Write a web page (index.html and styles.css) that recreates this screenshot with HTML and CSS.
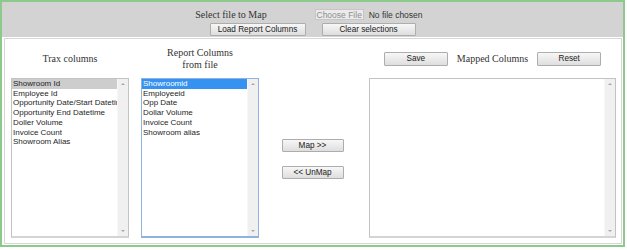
FILE: index.html
```html
<!DOCTYPE html>
<html>
<head>
    <title>Column Mapping</title>
    <link rel="stylesheet" href="styles.css">
</head>
<body>
    <div class="mapper">
        <div class="toolbar">
            <div class="file-row">
                <span class="file-label">Select file to Map</span>
                <span class="file-input">
                    <span class="file-btn">Choose File</span>
                    <span class="file-name">No file chosen</span>
                </span>
            </div>
            <div class="action-row">
                <button class="btn btn-load">Load Report Columns</button>
                <button class="btn btn-clear">Clear selections</button>
            </div>
        </div>

        <div class="panel">
            <div class="col col-trax">
                <div class="col-head">Trax columns</div>
                <div class="listbox">
                    <ul class="options">
                        <li class="selected">Showroom Id</li>
                        <li>Employee Id</li>
                        <li>Opportunity Date/Start Datetime</li>
                        <li>Opportunity End Datetime</li>
                        <li>Doller Volume</li>
                        <li>Invoice Count</li>
                        <li>Showroom Alias</li>
                    </ul>
                    <div class="scrollbar"><span class="arrow up"></span><span class="arrow down"></span></div>
                </div>
            </div>

            <div class="col col-report">
                <div class="col-head">Report Columns<br>from file</div>
                <div class="listbox focused">
                    <ul class="options">
                        <li class="selected">Showroomid</li>
                        <li>Employeeid</li>
                        <li>Opp Date</li>
                        <li>Dollar Volume</li>
                        <li>Invoice Count</li>
                        <li>Showroom alias</li>
                    </ul>
                    <div class="scrollbar"><span class="arrow up"></span><span class="arrow down"></span></div>
                </div>
            </div>

            <div class="col col-actions">
                <button class="btn btn-map">Map &gt;&gt;</button>
                <button class="btn btn-unmap">&lt;&lt; UnMap</button>
            </div>

            <div class="col col-mapped">
                <div class="col-head mapped-head">
                    <button class="btn btn-small">Save</button>
                    <span>Mapped Columns</span>
                    <button class="btn btn-small">Reset</button>
                </div>
                <div class="listbox">
                    <ul class="options"></ul>
                    <div class="scrollbar"><span class="arrow up"></span><span class="arrow down"></span></div>
                </div>
            </div>
        </div>
    </div>
</body>
</html>
```

FILE: styles.css
```css
body {
    margin: 0;
    font-family: "Liberation Serif", "Times New Roman", serif;
    color: #333;
}
.mapper {
    width: 621px;
    height: 243px;
    border: 2px solid #8dc88d;
    background: #fff;
}
.toolbar {
    height: 35px;
    background: #d3d3d3;
    box-sizing: border-box;
    padding-top: 6px;
}
.file-row {
    display: flex;
    justify-content: center;
    align-items: center;
    height: 13px;
}
.file-label {
    font-size: 10px;
    margin-right: 48px;
}
.file-input {
    display: flex;
    align-items: center;
    width: 115px;
    font-family: "Liberation Sans", Arial, sans-serif;
    font-size: 8.5px;
}
.file-btn {
    width: 49px;
    height: 11px;
    line-height: 10px;
    box-sizing: border-box;
    text-align: center;
    background: #ebebeb;
    border: 1px solid #c6c6c6;
    color: #8d8d8d;
}
.file-name {
    margin-left: 5px;
    color: #333;
}
.action-row {
    display: flex;
    justify-content: center;
    gap: 16px;
    margin-top: 2px;
}
.btn {
    height: 13px;
    padding: 0;
    box-sizing: border-box;
    font-family: "Liberation Sans", Arial, sans-serif;
    font-size: 8.2px;
    line-height: 11px;
    color: #1a1a1a;
    background: linear-gradient(#f7f7f7, #dedede);
    border: 1px solid #adadad;
    border-radius: 1px;
}
.btn-load {
    width: 96px;
}
.btn-clear {
    width: 94px;
}
.panel {
    margin: 1px 1px 1px 2px;
    height: 206px;
    box-sizing: border-box;
    border: 1px solid #d6d6d6;
    display: flex;
}
.col {
    display: flex;
    flex-direction: column;
}
.col-head {
    height: 39px;
    display: flex;
    align-items: center;
    justify-content: center;
    text-align: center;
    font-size: 10px;
    line-height: 11.5px;
}
.col-trax {
    margin-left: 6px;
    width: 118px;
}
.col-report {
    margin-left: 12px;
    width: 118px;
}
.col-actions {
    margin-left: 21px;
    width: 65px;
    padding-top: 100px;
    align-items: center;
}
.btn-map,
.btn-unmap {
    width: 62px;
}
.btn-unmap {
    margin-top: 14px;
}
.col-mapped {
    margin-left: 24px;
    width: 247px;
}
.mapped-head {
    gap: 9px;
}
.btn-small {
    width: 64px;
    height: 14px;
}
.listbox {
    height: 160px;
    box-sizing: border-box;
    border: 1px solid #c3c3c3;
    border-bottom: 2px solid #d4d4d4;
    display: flex;
    background: #fff;
}
.listbox.focused {
    border-color: #8fb2e0;
}
.options {
    flex: 1;
    min-width: 0;
    margin: 0;
    padding: 0;
    list-style: none;
    overflow: hidden;
    font-family: "Liberation Sans", Arial, sans-serif;
    font-size: 8px;
    line-height: 9.7px;
    color: #1e1e1e;
}
.options li {
    padding-left: 1px;
    white-space: nowrap;
    overflow: hidden;
}
.options li.selected {
    background: #cdcdcd;
}
.focused .options li.selected {
    background: #3592f0;
    color: #fff;
}
.scrollbar {
    width: 10px;
    background: #f0f0f0;
    border-left: 1px solid #f7f7f7;
    display: flex;
    flex-direction: column;
    justify-content: space-between;
    align-items: center;
    padding: 4px 0 4px;
}
.arrow {
    width: 0;
    height: 0;
    border-left: 2px solid transparent;
    border-right: 2px solid transparent;
}
.arrow.up {
    border-bottom: 2px solid #a8a8a8;
}
.arrow.down {
    border-top: 2px solid #a8a8a8;
}
```
